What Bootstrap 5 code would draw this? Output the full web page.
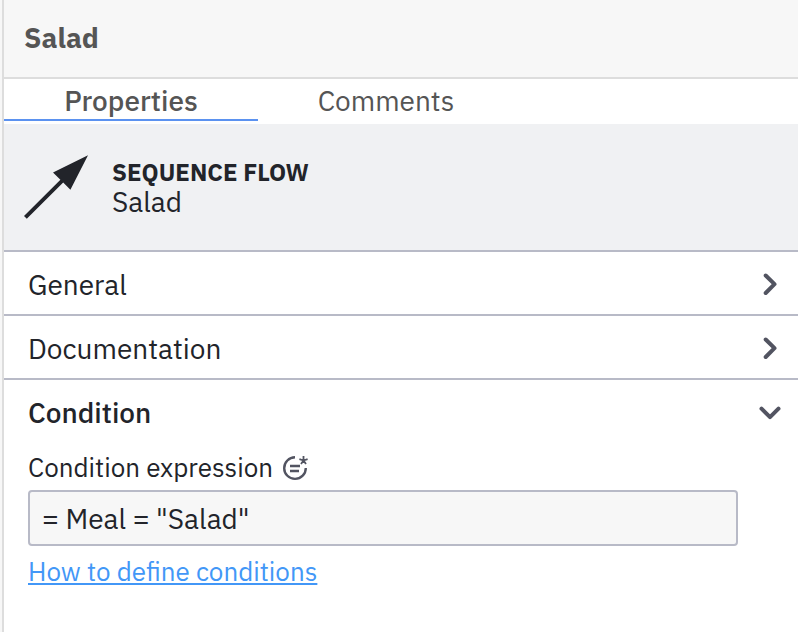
<!DOCTYPE html>
<html lang="en">
<head>
<meta charset="utf-8">
<meta name="viewport" content="width=device-width, initial-scale=1">
<title>Salad</title>
<link rel="stylesheet" href="https://cdn.jsdelivr.net/npm/bootstrap@5.3.0/dist/css/bootstrap.min.css">
<style>
body{font-family:"IBM Plex Sans",Roboto,"Liberation Sans",sans-serif;font-size:28px;line-height:32px;color:#22242a;background:#f7f7f7;overflow:hidden}
.panel{margin-left:2px;border-left:2px solid #ddd;height:632px}
.panel-top{height:79px;padding:0 0 1px 20px;border-bottom:2px solid #ddd;background:#f7f7f7;color:#555}
.tabs{height:45px;color:#555}
.tab{width:254px;height:42px;padding-top:6px;line-height:32px}
.tab.on{border-bottom:2px solid #5b92f0}
.tab:not(.on){padding-left:2px}
.medium{font-weight:500}
.element{height:128px;background:#f0f1f3;border-bottom:2px solid #b8bac7;padding-left:20px}
.element-text{padding-left:20px}
.kind{font-size:24px;line-height:30px}
.name{line-height:30px}
.section-row{height:64px;padding:3px 16px 0 24px;border-bottom:2px solid #b8bac7}
.section-row.open{border:0;padding-bottom:2px}
.body-group{padding:7px 60px 0 24px}
.field-label{font-size:26px;line-height:32px}
.expr{height:56px;margin-top:7px;padding:2px 12px 0;border:2px solid #b8bac7;border-radius:4px;background:#f7f7f7}
.help{font-size:26px;line-height:32px;margin-top:9px;color:#4297f7;text-decoration-thickness:2px;text-underline-offset:2px;text-decoration-skip-ink:none}
.help:hover{color:#4297f7}
</style>
</head>
<body>
<main class="panel bg-white">
  <header class="panel-top d-flex align-items-center fw-bold">Salad</header>
  <nav class="tabs d-flex">
    <div class="tab on medium text-center">Properties</div>
    <div class="tab text-center">Comments</div>
  </nav>
  <section class="element d-flex align-items-center">
    <svg width="68" height="68" viewBox="24 153 68 68" fill="#22242a"><path d="M24 215.9 60.4 179.7 53 172.5 88 155.3 70.4 189.7 63.2 182.6 26.8 218.8z"/></svg>
    <div class="element-text"><div class="kind fw-bold">SEQUENCE FLOW</div><div class="name">Salad</div></div>
  </section>
  <div class="section-row d-flex align-items-center justify-content-between">General
    <svg width="24" height="24" fill="none" stroke="#525461" stroke-width="4" stroke-linecap="round" stroke-linejoin="round"><path d="M7.7 2.5 16.5 11.2 7.7 20"/></svg></div>
  <div class="section-row d-flex align-items-center justify-content-between">Documentation
    <svg width="24" height="24" fill="none" stroke="#525461" stroke-width="4" stroke-linecap="round" stroke-linejoin="round"><path d="M7.7 2.5 16.5 11.2 7.7 20"/></svg></div>
  <div class="section-row open medium d-flex align-items-center justify-content-between">Condition
    <svg width="24" height="24" fill="none" stroke="#525461" stroke-width="4" stroke-linecap="round" stroke-linejoin="round"><path d="M3.5 7.7 12 16.2 20.5 7.7"/></svg></div>
  <div class="body-group">
    <div class="field-label d-flex align-items-center">Condition expression
      <svg class="ms-2" width="28" height="28" viewBox="281 453 28 28" fill="none" stroke="#525461" stroke-width="2.4"><path d="M295 457.3A10.8 10.8 0 1 0 305.8 468M290 466H300M290 471H299"/><path stroke-width="1.8" d="M303.5 460.5V456M303.5 460.5L307.6 459.2M303.5 460.5L306 464M303.5 460.5L301 464M303.5 460.5L299.4 459.2"/></svg></div>
    <div class="expr d-flex align-items-center">= Meal = "Salad"</div>
    <a href="#" class="help d-inline-block">How to define conditions</a>
  </div>
</main>
<script src="https://cdn.jsdelivr.net/npm/bootstrap@5.3.0/dist/js/bootstrap.bundle.min.js"></script>
</body>
</html>
